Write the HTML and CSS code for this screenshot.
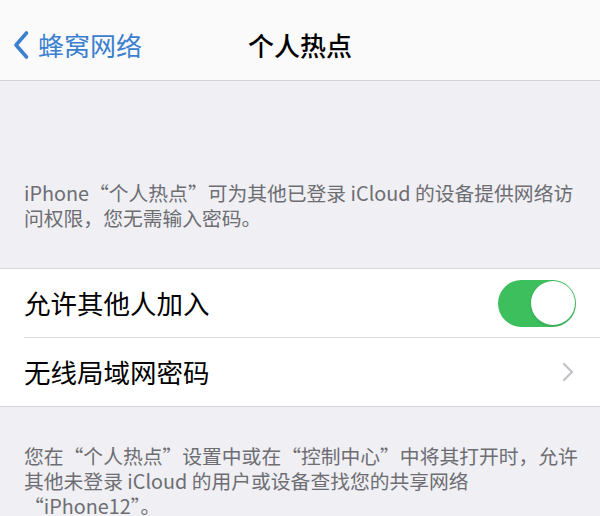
FILE: index.html
```html
<!DOCTYPE html>
<html lang="zh-CN">

<head>
    <meta charset="UTF-8">
    <meta name="viewport" content="width=device-width, initial-scale=1.0">
    <title>个人热点</title>
    <link rel="stylesheet" href="styles.css">
</head>

<body>
    <header class="nav-bar">
        <a class="nav-back" href="#">
            <svg class="back-icon" width="18" height="30" viewBox="0 0 18 30">
                <path d="M14.5 3 L4 15 L14.5 27" fill="none" stroke="currentColor" stroke-width="3.6" stroke-linecap="round" stroke-linejoin="round"/>
            </svg>
            <span>蜂窝网络</span>
        </a>
        <h1 class="nav-title">个人热点</h1>
        <div></div>
    </header>

    <p class="group-note note-top">iPhone“个人热点”可为其他已登录 iCloud 的设备提供网络访问权限，您无需输入密码。</p>

    <div class="group">
        <div class="row">
            <span class="row-label">允许其他人加入</span>
            <span class="switch on"><span class="knob"></span></span>
        </div>
        <div class="row">
            <span class="row-label">无线局域网密码</span>
            <svg class="chevron" width="12" height="20" viewBox="0 0 12 20">
                <path d="M2 2 L10 10 L2 18" fill="none" stroke="currentColor" stroke-width="2.2" stroke-linecap="round" stroke-linejoin="round"/>
            </svg>
        </div>
    </div>

    <p class="group-note note-bottom">您在“个人热点”设置中或在“控制中心”中将其打开时，允许其他未登录 iCloud 的用户或设备查找您的共享网络“iPhone12”。</p>
</body>

</html>
```

FILE: styles.css
```css
body {
    margin: 0;
    background-color: #efeff4;
    font-family: "Noto Sans CJK SC", "Noto Sans", sans-serif;
    color: #000000;
}

.nav-bar {
    height: 70px;
    padding-top: 10px;
    background-color: #fafafa;
    border-bottom: 1px solid #d3d3d6;
    display: grid;
    grid-template-columns: 1fr auto 1fr;
    align-items: center;
}

.nav-back {
    display: flex;
    align-items: center;
    gap: 8px;
    padding-left: 12px;
    color: #3a80cf;
    text-decoration: none;
    font-size: 26px;
    line-height: 30px;
}

.nav-title {
    margin: 0;
    font-size: 26px;
    font-weight: 500;
    line-height: 30px;
}

.group-note {
    margin: 0;
    padding-left: 24px;
    padding-right: 20px;
    font-size: 19.8px;
    line-height: 25px;
    color: #6d6d72;
}

.note-top {
    padding-top: 99px;
    padding-bottom: 38px;
}

.note-bottom {
    padding-top: 36px;
}

.group {
    background-color: #ffffff;
    border-top: 1px solid #d8d8dc;
    border-bottom: 1px solid #d8d8dc;
}

.row {
    height: 68px;
    margin-left: 24px;
    padding-right: 24px;
    display: flex;
    align-items: center;
    justify-content: space-between;
}

.row + .row {
    border-top: 1px solid #dcdce0;
}

.row-label {
    font-size: 26.5px;
    line-height: 30px;
}

.switch {
    width: 78px;
    height: 47px;
    border-radius: 24px;
    background-color: #3cbf5c;
    position: relative;
}

.knob {
    position: absolute;
    top: 1.5px;
    right: 1.5px;
    width: 44px;
    height: 44px;
    border-radius: 50%;
    background-color: #ffffff;
    box-shadow: 0 1px 3px rgba(0, 0, 0, 0.15);
}

.chevron {
    color: #c2c2c6;
    margin-right: 2px;
}
```
